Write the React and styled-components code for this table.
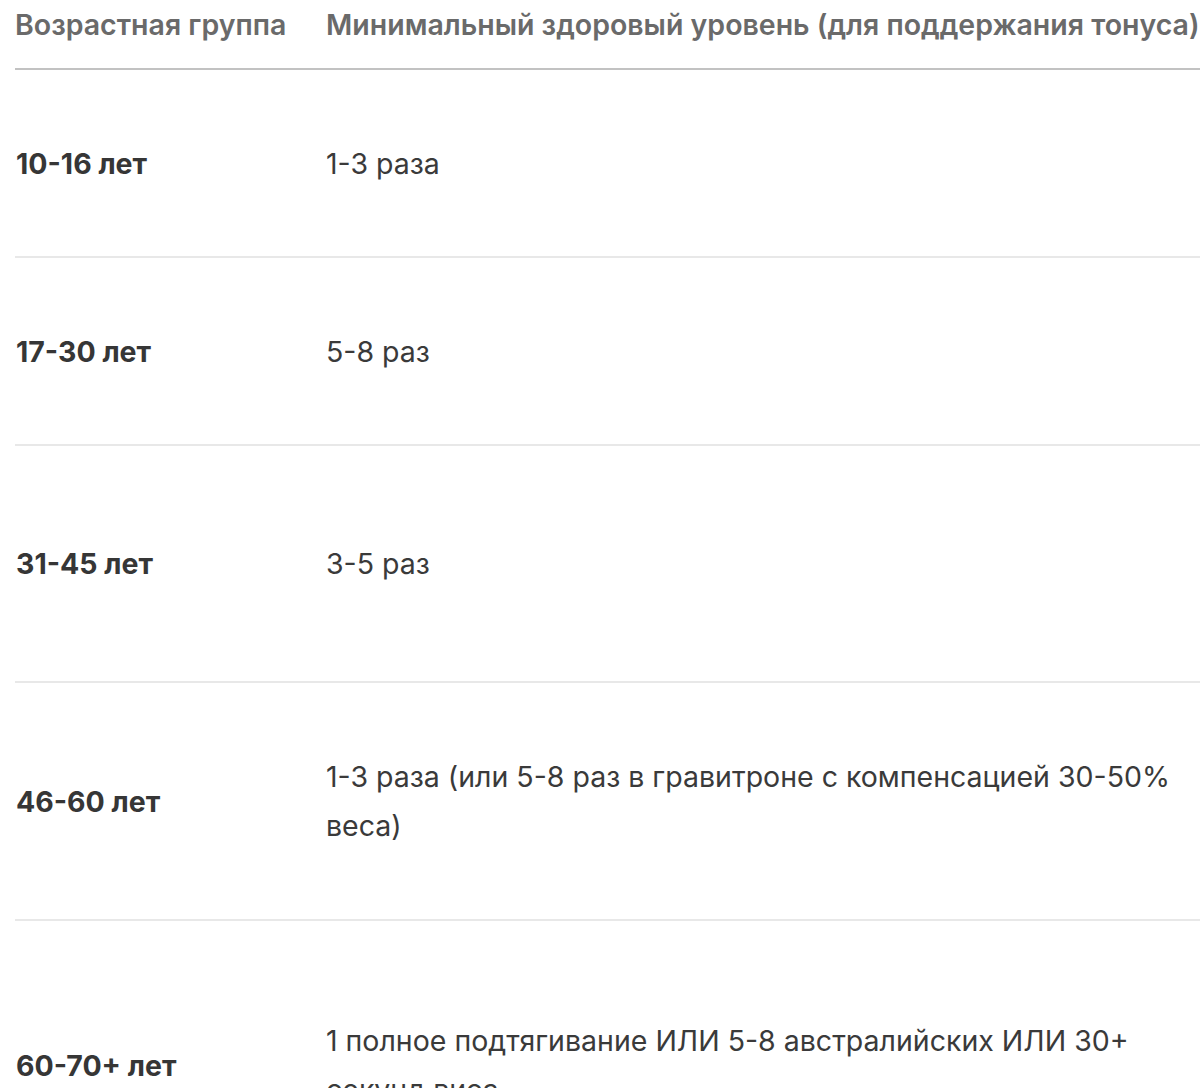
import React from "react";
import styled, { createGlobalStyle } from "styled-components";

const Global = createGlobalStyle`
  html, body { margin: 0; padding: 0; background: #ffffff; }
  body { overflow: hidden; }
`;

const Page = styled.div`
  width: 1200px;
  height: 1088px;
  overflow: hidden;
  padding-left: 15px;
  box-sizing: border-box;
  font-family: Inter, "Noto Sans", "Liberation Sans", sans-serif;
  font-size: 28.5px;
  line-height: 49px;
`;

const Table = styled.table`
  border-collapse: collapse;
  table-layout: fixed;
  width: 1500px;
`;

const HeadCell = styled.th`
  text-align: left;
  font-weight: 600;
  color: #6a6a6a;
  padding: 0 0 19px 0;
  border-bottom: 2px solid #c2c2c2;
  white-space: nowrap;
  vertical-align: top;
`;

const Row = styled.tr`
  height: ${(p) => p.$h}px;
  border-bottom: 2px solid #e8e8e8;
`;

const AgeCell = styled.td`
  font-weight: 700;
  color: #363636;
  padding: 20px 20px 20px 1px;
  vertical-align: middle;
`;

const LevelCell = styled.td`
  color: #3a3a3a;
  padding: 20px 20px 20px 0;
  vertical-align: middle;
`;

const rows = [
  { age: "10-16 лет", level: "1-3 раза", h: 188 },
  { age: "17-30 лет", level: "5-8 раз", h: 188 },
  { age: "31-45 лет", level: "3-5 раз", h: 237 },
  {
    age: "46-60 лет",
    level: "1-3 раза (или 5-8 раз в гравитроне с компенсацией 30-50% веса)",
    h: 238,
  },
  {
    age: "60-70+ лет",
    level: "1 полное подтягивание ИЛИ 5-8 австралийских ИЛИ 30+ секунд виса",
    h: 290,
  },
];

export default function App() {
  return (
    <Page>
      <Global />
      <Table>
        <colgroup>
          <col style={{ width: 311 }} />
          <col style={{ width: 900 }} />
          <col />
        </colgroup>
        <thead>
          <tr>
            <HeadCell>Возрастная группа</HeadCell>
            <HeadCell>Минимальный здоровый уровень (для поддержания тонуса)</HeadCell>
            <HeadCell></HeadCell>
          </tr>
        </thead>
        <tbody>
          {rows.map((r) => (
            <Row key={r.age} $h={r.h}>
              <AgeCell>{r.age}</AgeCell>
              <LevelCell>{r.level}</LevelCell>
              <LevelCell></LevelCell>
            </Row>
          ))}
        </tbody>
      </Table>
    </Page>
  );
}
